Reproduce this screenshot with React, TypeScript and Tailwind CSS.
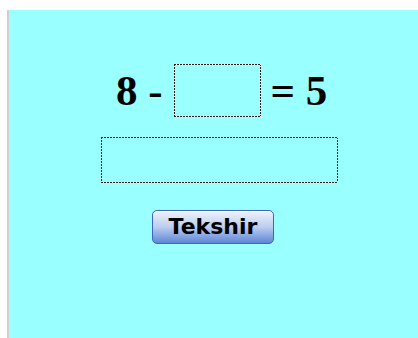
import React from 'react';

const serif = { fontFamily: '"Liberation Serif", "Times New Roman", serif' };

// dashed answer box: dark 2px dashes with white 1px gaps, cyan inside
const AnswerBox: React.FC<{ className?: string }> = ({ className }) => (
  <div
    className={`[background:repeating-linear-gradient(90deg,#1e1e1e_0_2px,#ffffff_2px_3px)_top/100%_1px_no-repeat,repeating-linear-gradient(90deg,#1e1e1e_0_2px,#ffffff_2px_3px)_bottom/100%_1px_no-repeat,repeating-linear-gradient(180deg,#1e1e1e_0_2px,#ffffff_2px_3px)_left/1px_100%_no-repeat,repeating-linear-gradient(180deg,#1e1e1e_0_2px,#ffffff_2px_3px)_right/1px_100%_no-repeat,#99ffff] ${className ?? ''}`}
  />
);

export default function App() {
  return (
    <div className="w-[418px] h-[338px] bg-white pt-[10px] pl-[7px] overflow-hidden">
      <div className="h-full border-l-2 border-[#cfcfcf] bg-[#99ffff] flex flex-col items-start">
        {/* equation row */}
        <div className="flex items-center mt-[54px] ml-[107px]" style={serif}>
          <span className="text-[43px] leading-[43px] font-bold text-black whitespace-pre">8 -</span>
          <AnswerBox className="w-[87px] h-[53px] ml-[11px]" />
          <span className="text-[43px] leading-[43px] font-bold text-black whitespace-pre ml-[10px]">= 5</span>
        </div>

        {/* wide input */}
        <AnswerBox className="w-[237px] h-[46px] mt-[20px] ml-[92px]" />

        {/* check button */}
        <button
          className="mt-[27px] ml-[143px] w-[122px] h-[34px] rounded-[5px] border border-[#3f66b8] bg-gradient-to-b from-[#eef3fc] via-[#bccdef] to-[#5f86d6] shadow-[inset_0_1px_0_#ffffff] flex items-center justify-center"
          style={{ fontFamily: '"DejaVu Sans", Verdana, sans-serif' }}
        >
          <span className="text-[22px] font-bold text-black leading-none">Tekshir</span>
        </button>
      </div>
    </div>
  );
}
